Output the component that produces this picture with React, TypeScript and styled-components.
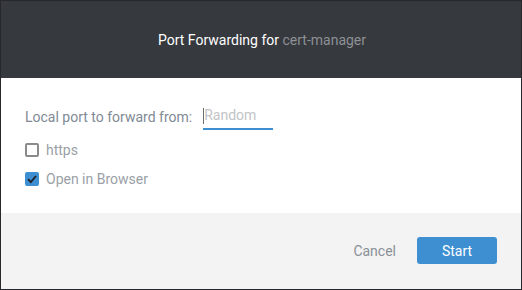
import styled, { createGlobalStyle } from 'styled-components';
import { useState } from 'react';

const GlobalStyle = createGlobalStyle`
  html, body {
    margin: 0;
    padding: 0;
    background: #ffffff;
  }
  body {
    font-family: Roboto, 'Liberation Sans', sans-serif;
  }
`;

const Dialog = styled('div')`
  box-sizing: border-box;
  width: 522px;
  height: 290px;
  border: 1px solid #26282b;
  display: flex;
  flex-direction: column;
  background: #ffffff;
`;

const Header = styled('div')`
  height: 77px;
  background: #36393e;
  display: flex;
  align-items: center;
  justify-content: center;
  font-size: 14px;
  color: #ffffff;
  padding-left: 2px;
`;

const Muted = styled('span')`
  color: #8e9095;
`;

const Body = styled('div')`
  height: 135px;
  box-sizing: border-box;
  padding: 25px 24px 0;
  display: flex;
  flex-direction: column;
`;

const PortRow = styled('div')`
  display: flex;
  align-items: center;
  height: 27px;
  margin-bottom: 13px;
`;

const Label = styled('label')`
  font-size: 14px;
  color: #7f8a94;
`;

const InputWrap = styled('div')`
  position: relative;
  margin-left: 11px;
  &::before {
    content: '';
    position: absolute;
    left: 0;
    top: 5px;
    width: 1px;
    height: 16px;
    background: #6a6c70;
  }
`;

const PortInput = styled('input')`
  box-sizing: border-box;
  width: 70px;
  height: 27px;
  padding: 0 0 2px 1px;
  border: none;
  border-bottom: 2px solid #3d8fd1;
  outline: none;
  font-family: inherit;
  font-size: 14px;
  color: #555;
  background: transparent;
  &::placeholder {
    color: #c2c4c6;
  }
`;

const CheckRow = styled('label')`
  display: flex;
  align-items: center;
  height: 14px;
  margin-bottom: 15px;
  font-size: 14px;
  color: #9aa0a6;
  cursor: pointer;
`;

const Box = styled('span')<{ $checked: boolean }>`
  box-sizing: border-box;
  width: 14px;
  height: 14px;
  margin-right: 7px;
  border-radius: 2px;
  border: 2px solid ${(p) => (p.$checked ? '#3d8fd1' : '#8a8b8d')};
  background: ${(p) => (p.$checked ? '#3d8fd1' : '#ffffff')};
  display: flex;
  align-items: center;
  justify-content: center;
`;

const Footer = styled('div')`
  flex: 1;
  background: #f3f3f3;
  display: flex;
  justify-content: flex-end;
  align-items: center;
  padding: 0 24px 1px 0;
  gap: 21px;
`;

const CancelButton = styled('button')`
  border: none;
  background: none;
  padding: 0;
  font-family: inherit;
  font-size: 14px;
  color: #8a9096;
  cursor: pointer;
`;

const StartButton = styled('button')`
  width: 80px;
  height: 27px;
  border: none;
  border-radius: 3px;
  background: #3d8fd1;
  color: #ffffff;
  font-family: inherit;
  font-size: 14px;
  cursor: pointer;
`;

const Check = () => (
  <svg width="10" height="10" viewBox="0 0 10 10">
    <path d="M1 5.2 L3.8 8 L9 2" fill="none" stroke="#1f2226" strokeWidth="1.9" />
  </svg>
);

const App = () => {
  const [https, setHttps] = useState(false);
  const [openBrowser, setOpenBrowser] = useState(true);

  return (
    <>
      <GlobalStyle />
      <Dialog>
        <Header>
          Port Forwarding for&nbsp;<Muted>cert-manager</Muted>
        </Header>
        <Body>
          <PortRow>
            <Label htmlFor="port">Local port to forward from:</Label>
            <InputWrap>
              <PortInput id="port" placeholder="Random" />
            </InputWrap>
          </PortRow>
          <CheckRow onClick={() => setHttps(!https)}>
            <Box $checked={https}>{https && <Check />}</Box>
            https
          </CheckRow>
          <CheckRow onClick={() => setOpenBrowser(!openBrowser)}>
            <Box $checked={openBrowser}>{openBrowser && <Check />}</Box>
            Open in Browser
          </CheckRow>
        </Body>
        <Footer>
          <CancelButton>Cancel</CancelButton>
          <StartButton>Start</StartButton>
        </Footer>
      </Dialog>
    </>
  );
};

export default App;
